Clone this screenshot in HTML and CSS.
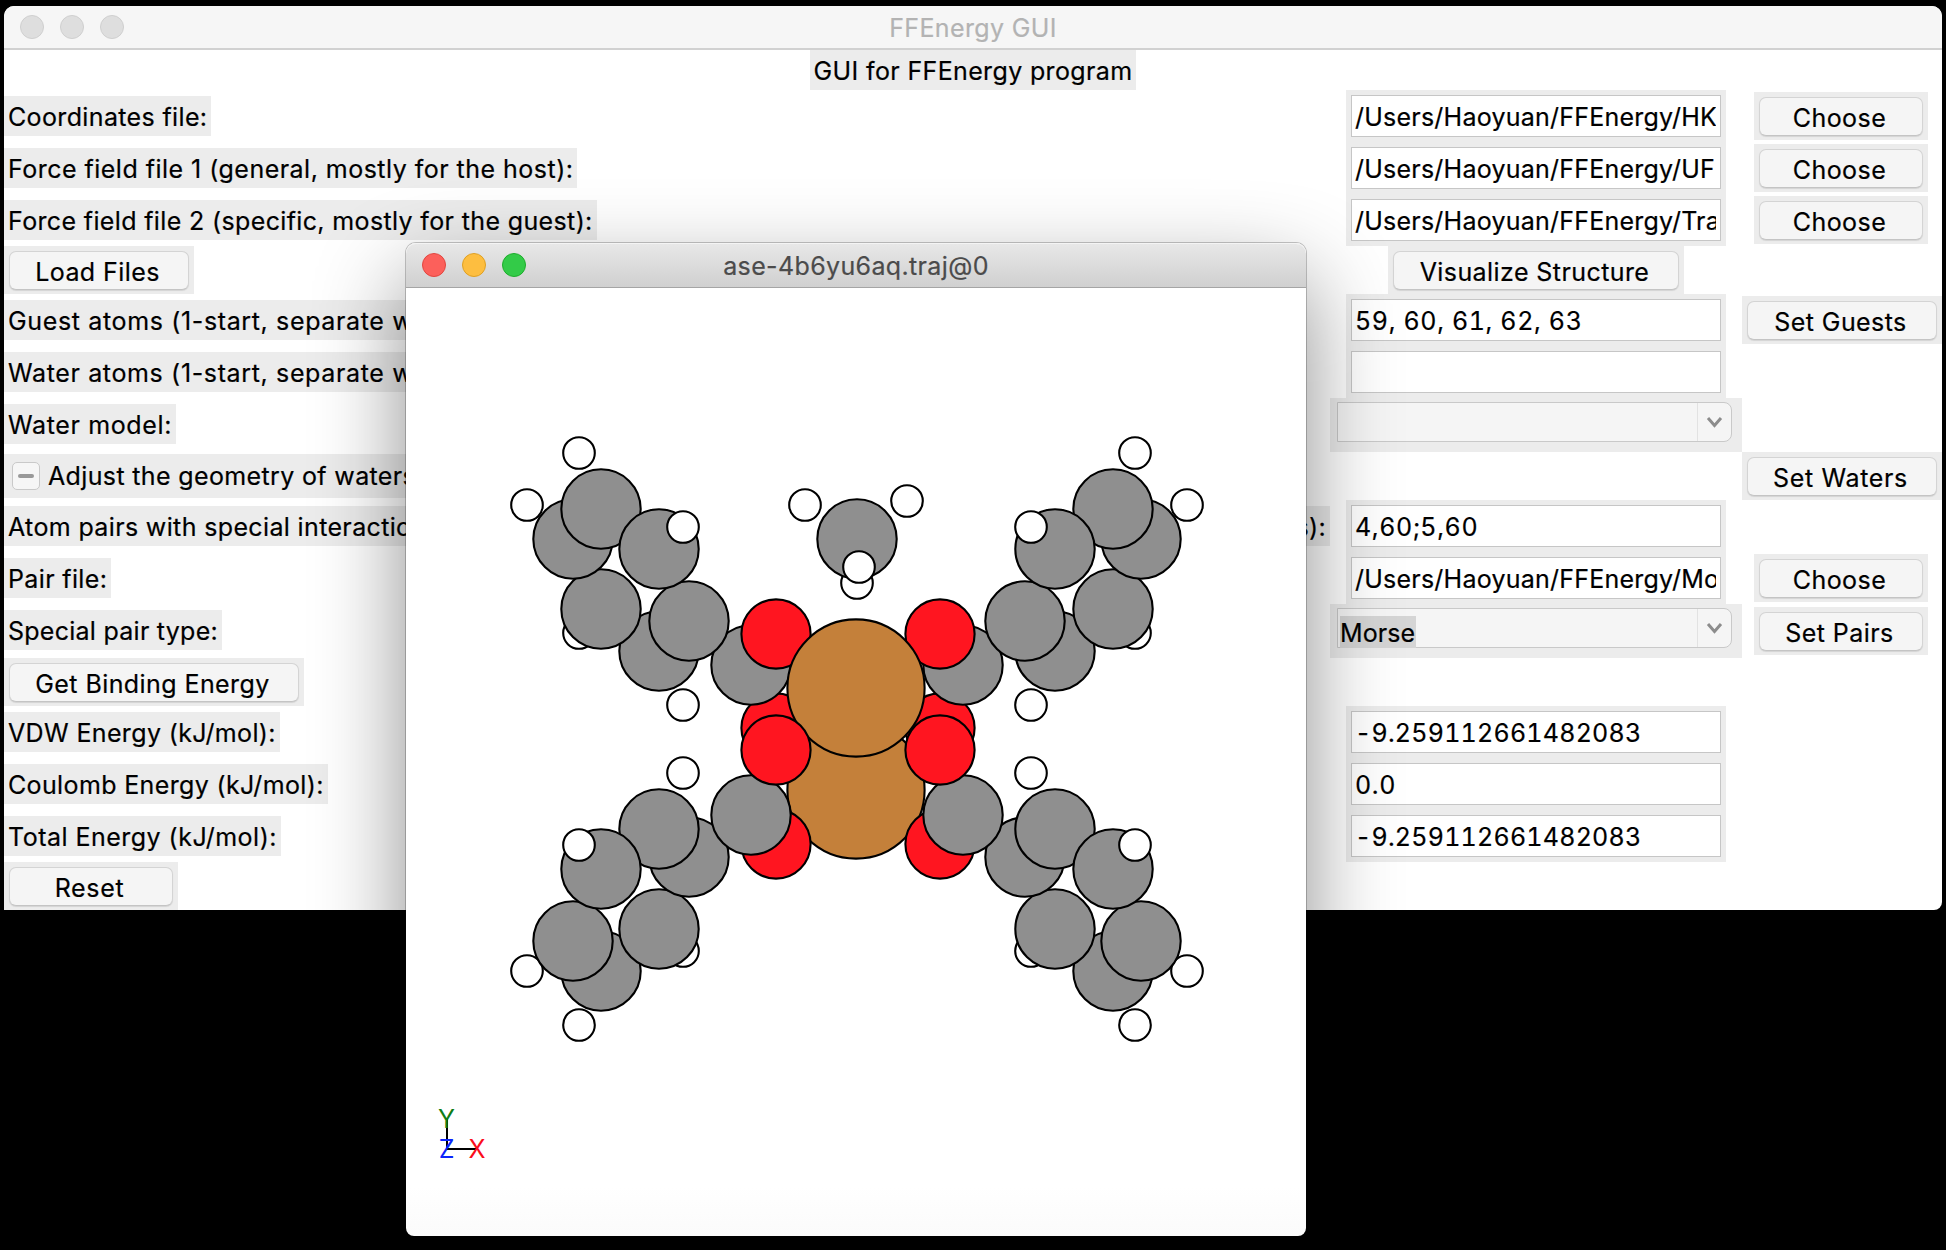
FILE: index.html
```html
<!DOCTYPE html>
<html lang="en">
<head>
<meta charset="utf-8">
<title>FFEnergy GUI</title>
<link rel="stylesheet" href="styles.css">
</head>
<body>
<main class="window">
  <header class="titlebar">
    <div class="lights"><i></i><i></i><i></i></div>
    <h1>FFEnergy GUI</h1>
  </header>
  <div class="form">
    <div class="row row-title"><span class="label">GUI for FFEnergy program</span></div>

    <div class="row">
      <div class="c1"><span class="label">Coordinates file:</span></div>
      <div class="c2"><div class="entry"><div class="field"><span>/Users/Haoyuan/FFEnergy/HK</span></div></div></div>
      <div class="c3"><div class="btn choose"><button>Choose</button></div></div>
    </div>
    <div class="row">
      <div class="c1"><span class="label loose">Force field file 1 (general, mostly for the host):</span></div>
      <div class="c2"><div class="entry"><div class="field"><span>/Users/Haoyuan/FFEnergy/UF</span></div></div></div>
      <div class="c3"><div class="btn choose"><button>Choose</button></div></div>
    </div>
    <div class="row">
      <div class="c1"><span class="label">Force field file 2 (specific, mostly for the guest):</span></div>
      <div class="c2"><div class="entry"><div class="field"><span>/Users/Haoyuan/FFEnergy/Tra</span></div></div></div>
      <div class="c3"><div class="btn choose"><button>Choose</button></div></div>
    </div>
    <div class="row row-button">
      <div class="c1"><div class="btn load"><button>Load Files</button></div></div>
      <div class="c2"><div class="btn visualize"><button>Visualize Structure</button></div></div>
      <div class="c3"></div>
    </div>
    <div class="row">
      <div class="c1"><span class="label looser">Guest atoms (1-start, separate with commas):</span></div>
      <div class="c2"><div class="entry"><div class="field list"><span>59, 60, 61, 62, 63</span></div></div></div>
      <div class="c3"><div class="btn wide"><button>Set Guests</button></div></div>
    </div>
    <div class="row">
      <div class="c1"><span class="label looser">Water atoms (1-start, separate with commas):</span></div>
      <div class="c2"><div class="entry"><div class="field"></div></div></div>
      <div class="c3"></div>
    </div>
    <div class="row row-combo">
      <div class="c1"><span class="label looser">Water model:</span></div>
      <div class="c2"><div class="combo"><div class="combo-box"><span class="value"></span><span class="arrow"><svg width="17" height="12" viewBox="0 0 17 12"><path d="M2 2l6.5 7.5L15 2"/></svg></span></div></div></div>
      <div class="c3"></div>
    </div>
    <div class="row row-button">
      <div class="c1"><label class="label check"><span class="box"></span>Adjust the geometry of waters</label></div>
      <div class="c2"></div>
      <div class="c3"><div class="btn wide"><button class="looser">Set Waters</button></div></div>
    </div>
    <div class="row">
      <div class="c1"><span class="label full"><span>Atom pairs with special interactions</span><span>(pairs):</span></span></div>
      <div class="c2"><div class="entry"><div class="field list"><span>4,60;5,60</span></div></div></div>
      <div class="c3"></div>
    </div>
    <div class="row">
      <div class="c1"><span class="label">Pair file:</span></div>
      <div class="c2"><div class="entry"><div class="field"><span>/Users/Haoyuan/FFEnergy/Mo</span></div></div></div>
      <div class="c3"><div class="btn choose"><button>Choose</button></div></div>
    </div>
    <div class="row row-combo">
      <div class="c1"><span class="label tight">Special pair type:</span></div>
      <div class="c2"><div class="combo"><div class="combo-box"><span class="value"><mark>Morse</mark></span><span class="arrow"><svg width="17" height="12" viewBox="0 0 17 12"><path d="M2 2l6.5 7.5L15 2"/></svg></span></div></div></div>
      <div class="c3"><div class="btn choose"><button>Set Pairs</button></div></div>
    </div>
    <div class="row row-button">
      <div class="c1"><div class="btn binding"><button>Get Binding Energy</button></div></div>
      <div class="c2"></div>
      <div class="c3"></div>
    </div>
    <div class="row">
      <div class="c1"><span class="label">VDW Energy (kJ/mol):</span></div>
      <div class="c2"><div class="entry"><div class="field"><span>-9.259112661482083</span></div></div></div>
      <div class="c3"></div>
    </div>
    <div class="row">
      <div class="c1"><span class="label">Coulomb Energy (kJ/mol):</span></div>
      <div class="c2"><div class="entry"><div class="field list"><span>0.0</span></div></div></div>
      <div class="c3"></div>
    </div>
    <div class="row">
      <div class="c1"><span class="label loose">Total Energy (kJ/mol):</span></div>
      <div class="c2"><div class="entry"><div class="field"><span>-9.259112661482083</span></div></div></div>
      <div class="c3"></div>
    </div>
    <div class="row row-button">
      <div class="c1"><div class="btn choose"><button class="looser">Reset</button></div></div>
      <div class="c2"></div>
      <div class="c3"></div>
    </div>
  </div>
</main>

<section class="viewer">
  <header class="titlebar viewer-bar">
    <div class="lights"><i class="red"></i><i class="yellow"></i><i class="green"></i></div>
    <h2>ase-4b6yu6aq.traj@0</h2>
  </header>
  <svg class="scene" viewBox="406 288 900 948">
    <!-- hydrogens at the back -->
    <g class="h">
      <circle cx="579" cy="633" r="15.8"/><circle cx="1135" cy="633" r="15.8"/>
      <circle cx="683" cy="951" r="15.8"/><circle cx="1031" cy="951" r="15.8"/>
      <circle cx="579" cy="1025" r="15.8"/><circle cx="1135" cy="1025" r="15.8"/>
      <circle cx="683" cy="705" r="15.8"/><circle cx="1031" cy="705" r="15.8"/>
      <circle cx="527" cy="505" r="15.8"/><circle cx="1187" cy="505" r="15.8"/>
      <circle cx="527" cy="971" r="15.8"/><circle cx="1187" cy="971" r="15.8"/>
      <circle cx="857" cy="583" r="15.8"/>
    </g>
    <!-- lower metal atom and the oxygens behind the ring carbons -->
    <circle class="cu" cx="856" cy="790" r="68.6"/>
    <g class="o">
      <circle cx="776" cy="844" r="34.6"/><circle cx="940" cy="844" r="34.6"/>
      <circle cx="776" cy="728" r="34.6"/><circle cx="940" cy="728" r="34.6"/>
    </g>
    <g class="c">
      <circle cx="659" cy="651" r="39.7"/><circle cx="1055" cy="651" r="39.7"/>
      <circle cx="601" cy="609" r="39.7"/><circle cx="1113" cy="609" r="39.7"/>
      <circle cx="751" cy="665" r="39.7"/><circle cx="963" cy="665" r="39.7"/>
      <circle cx="689" cy="621" r="39.7"/><circle cx="1025" cy="621" r="39.7"/>
      <circle cx="573" cy="539" r="39.7"/><circle cx="1141" cy="539" r="39.7"/>
      <circle cx="601" cy="509" r="39.7"/><circle cx="1113" cy="509" r="39.7"/>
      <circle cx="659" cy="549" r="39.7"/><circle cx="1055" cy="549" r="39.7"/>
      <circle cx="601" cy="971" r="39.7"/><circle cx="1113" cy="971" r="39.7"/>
      <circle cx="659" cy="929" r="39.7"/><circle cx="1055" cy="929" r="39.7"/>
      <circle cx="573" cy="941" r="39.7"/><circle cx="1141" cy="941" r="39.7"/>
      <circle cx="689" cy="857" r="39.7"/><circle cx="1025" cy="857" r="39.7"/>
      <circle cx="659" cy="829" r="39.7"/><circle cx="1055" cy="829" r="39.7"/>
      <circle cx="601" cy="869" r="39.7"/><circle cx="1113" cy="869" r="39.7"/>
      <circle cx="751" cy="815" r="39.7"/><circle cx="963" cy="815" r="39.7"/>
      <circle cx="857" cy="539" r="39.7"/>
    </g>
    <g class="o"><circle cx="776" cy="634" r="34.6"/><circle cx="940" cy="634" r="34.6"/></g>
    <circle class="cu" cx="856" cy="688" r="68.6"/>
    <g class="o"><circle cx="776" cy="750" r="34.6"/><circle cx="940" cy="750" r="34.6"/></g>
    <g class="h">
      <circle cx="579" cy="453" r="15.8"/><circle cx="1135" cy="453" r="15.8"/>
      <circle cx="683" cy="527" r="15.8"/><circle cx="1031" cy="527" r="15.8"/>
      <circle cx="683" cy="773" r="15.8"/><circle cx="1031" cy="773" r="15.8"/>
      <circle cx="579" cy="845" r="15.8"/><circle cx="1135" cy="845" r="15.8"/>
      <circle cx="805" cy="505" r="15.8"/><circle cx="907" cy="501" r="15.8"/>
      <circle cx="859" cy="567" r="15.8"/>
    </g>
    <path class="axes" d="M447 1119V1149H477"/>
    <g class="axis-names">
      <text class="x" x="477" y="1158">X</text>
      <text class="y" x="446.5" y="1128">Y</text>
      <text class="z" x="446.5" y="1158">Z</text>
    </g>
  </svg>
</section>
</body>
</html>
```
FILE: styles.css
```css
* { box-sizing: border-box; }

body {
  margin: 0;
  width: 1946px;
  height: 1250px;
  overflow: hidden;
  position: relative;
  background: #000;
  color: #000;
  font: 25px/42px Inter, "Liberation Sans", sans-serif;
  letter-spacing: 0.36px;
  -webkit-text-stroke: 0.2px;
}

.window {
  width: 1938px;
  height: 904px;
  margin: 6px 4px 0;
  overflow: hidden;
  background: #fff;
  border-radius: 10px 10px 8px 0;
}

.titlebar {
  display: grid;
  grid-template-columns: 140px 1fr 140px;
  align-items: center;
  height: 44px;
  background: #f6f6f6;
  border-bottom: 2px solid #d1d1d1;
}

.titlebar h1,
.titlebar h2 {
  margin: 0;
  padding-top: 3px;
  font-size: 25px;
  font-weight: 400;
  line-height: 39px;
  text-align: center;
  color: #b3b3b3;
}

.lights { display: flex; gap: 16px; padding-left: 16px; }
.lights i {
  width: 24px;
  height: 24px;
  border-radius: 50%;
  background: #dedede;
  border: 1px solid #cfcfcf;
}
.lights .red { background: #fc605b; border-color: #e2463f; }
.lights .yellow { background: #fdbe40; border-color: #dfa023; }
.lights .green { background: #33cb48; border-color: #1dad2b; }

/* form grid */
.row {
  display: grid;
  grid-template-columns: 1326px 412px 200px;
  align-items: center;
  height: 52px;
}
.row-title { display: flex; justify-content: center; height: 40px; }
.row-button { height: 48px; }
.row-combo { height: 54px; }
.c1 { display: flex; }
.c2, .c3 { display: flex; justify-content: center; }

.label {
  height: 40px;
  padding: 0 4px;
  background: #ececec;
  white-space: nowrap;
}
.row-combo .label { position: relative; top: -1px; }
.tight { letter-spacing: 0.26px; }
.loose { letter-spacing: 0.48px; }
.looser { letter-spacing: 0.64px; }
.full { display: flex; justify-content: space-between; width: 1326px; }

.check {
  display: flex;
  align-items: center;
  gap: 8px;
  height: 44px;
  padding-left: 8px;
  width: 900px;
}
.check .box {
  display: grid;
  place-items: center;
  width: 28px;
  height: 28px;
  background: #f6f6f6;
  border: 1px solid #c9c9c9;
  border-radius: 5px;
}
.check .box::after {
  content: "";
  width: 16px;
  height: 4px;
  border-radius: 2px;
  background: #999;
}

.entry { height: 52px; padding: 5px; background: #ececec; }
.field {
  width: 370px;
  height: 42px;
  padding: 0 4px 0 3px;
  border: 1px solid #c6c6c6;
  background: #fff;
  white-space: nowrap;
  letter-spacing: 0.23px;
  font-feature-settings: "tnum";
}
.field span { display: block; height: 40px; overflow: hidden; }
.list { letter-spacing: 0.65px; }

.btn {
  display: flex;
  height: 48px;
  padding: 5px 5px 4px;
  background: #ececec;
}
.btn button {
  flex: 1;
  height: 39px;
  padding: 1px 3px 0 0;
  font: inherit;
  line-height: 38px;
  letter-spacing: 0.42px;
  color: #000;
  background: #f5f5f5;
  border: 1px solid #d4d4d4;
  border-bottom-color: #c4c4c4;
  border-radius: 7px;
  box-shadow: 0 1px 1px rgba(0, 0, 0, 0.1);
}
.btn button.looser { letter-spacing: 0.66px; }
.choose { width: 174px; margin-right: 2px; }
.c1 .choose { margin-right: 0; }
.load { width: 190px; }
.visualize { width: 296px; }
.wide { width: 200px; }
.binding { width: 300px; }

.combo { width: 412px; height: 54px; padding: 4px 10px 10px 7px; background: #ececec; }
.combo-box {
  display: flex;
  width: 395px;
  height: 40px;
  background: #f5f5f5;
  border: 1px solid #c9c9c9;
  border-radius: 0 8px 8px 0;
}
.value { flex: 1; padding: 7px 0 0 2px; line-height: 32px; }
.value mark {
  display: block;
  width: 76px;
  height: 32px;
  line-height: 34px;
  letter-spacing: 0.1px;
  color: inherit;
  background: #d5d5d5;
}
.arrow {
  display: grid;
  place-items: center;
  width: 34px;
  border-left: 1px solid #e2e2e2;
}
.arrow path { fill: none; stroke: #8c8c8c; stroke-width: 3; }

/* structure viewer floating over the form */
.viewer {
  position: absolute;
  left: 406px;
  top: 243px;
  width: 900px;
  height: 993px;
  border-radius: 10px 10px 8px 8px;
  background: linear-gradient(#fff 95%, #fbfbfb);
  box-shadow: 0 0 0 1px rgba(0, 0, 0, 0.22), 0 36px 90px rgba(0, 0, 0, 0.45);
}
.viewer-bar {
  height: 45px;
  border-radius: 10px 10px 0 0;
  background: linear-gradient(#e8e8e8, #d0d0d0);
  border-bottom: 1px solid #a5a5a5;
  box-shadow: inset 0 1px #f4f4f4;
}
.viewer-bar h2 { color: #4b4b4b; }
.scene { display: block; width: 900px; height: 948px; }
.scene circle { stroke: #000; stroke-width: 2.1; }
.h circle { fill: #fff; }
.c circle { fill: #8f8f8f; }
.o circle { fill: #ff1520; }
.cu { fill: #c4803a; }
.axes { fill: none; stroke: #000; stroke-width: 2; }
.axis-names { text-anchor: middle; letter-spacing: 0; }
.x { fill: #fb0d1b; }
.y { fill: #0f7d16; }
.z { fill: #0b24fb; }
```
